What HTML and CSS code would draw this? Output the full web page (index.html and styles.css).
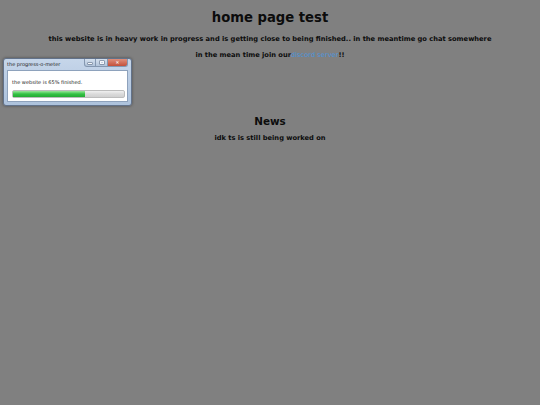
FILE: index.html
```html
<!DOCTYPE html>
<html lang="en">
<head>
  <meta charset="UTF-8" />
  <title>home page test</title>
  <link rel="stylesheet" href="styles.css">
</head>
<body>
  <h1>home page test</h1>
  <p class="intro">this website is in heavy work in progress and is getting close to being finished.. in the meantime go chat somewhere</p>
  <p class="join">in the mean time join our<a href="#">discord server</a>!!</p>

  <h2>News</h2>
  <p class="news">idk ts is still being worked on</p>

  <div class="window">
    <div class="titlebar">
      <span class="title">the progress-o-meter</span>
      <div class="controls">
        <span class="btn min"><i class="dash"></i></span>
        <span class="btn max"><i class="box"></i></span>
        <span class="btn close">&#x2715;</span>
      </div>
    </div>
    <div class="client">
      <p class="status">the website is 65% finished.</p>
      <div class="bar"><div class="fill" style="width: 65%"></div></div>
    </div>
  </div>
</body>
</html>
```

FILE: styles.css
```css
body {
  margin: 0;
  background: #808080;
  font-family: "DejaVu Sans", Verdana, sans-serif;
  color: #0c0c0c;
  text-align: center;
}
h1 {
  font-size: 13.2px;
  line-height: 18px;
  margin: 9px 0 0;
}
p {
  font-size: 6.7px;
  font-weight: bold;
  line-height: 10px;
  margin: 6px 0 0;
}
.intro {
  margin-top: 7px;
}
.join a {
  color: #4c95dd;
  font-weight: normal;
  text-decoration: none;
}
h2 {
  font-size: 10.4px;
  line-height: 14px;
  margin: 54px 0 0;
}
.news {
  margin-top: 5px;
}

.window {
  position: absolute;
  left: 3px;
  top: 58px;
  width: 129px;
  height: 48px;
  box-sizing: border-box;
  border: 1px solid #62728a;
  border-radius: 3px;
  background: linear-gradient(#c6d6ea, #adc2dc);
  box-shadow: 0 0 3px rgba(0, 0, 0, 0.45);
  text-align: left;
}
.titlebar {
  display: flex;
  justify-content: space-between;
  height: 11px;
  padding: 0 3px 0 3px;
}
.title {
  font-size: 5px;
  line-height: 11px;
  color: #222;
}
.controls {
  display: flex;
}
.btn {
  display: flex;
  align-items: center;
  justify-content: center;
  width: 12px;
  height: 8px;
  border: 1px solid #8497b0;
  border-top: none;
  background: linear-gradient(#d4e0ee, #b2c4da);
  box-sizing: border-box;
}
.btn.min {
  border-radius: 0 0 0 3px;
}
.btn.max {
  border-left: none;
}
.dash {
  width: 4px;
  height: 1px;
  margin-top: 2px;
  background: #f4f6fa;
  box-shadow: 0 0 0 0.5px #56647a;
}
.box {
  width: 4px;
  height: 3px;
  border: 1px solid #f4f6fa;
  box-shadow: 0 0 0 0.5px #56647a;
  box-sizing: border-box;
}
.btn.close {
  width: 20px;
  border-left: none;
  border-radius: 0 0 3px 0;
  background: linear-gradient(#df8f7c, #c4503a);
  color: #fff;
  font-size: 4.5px;
  line-height: 7px;
}
.client {
  margin: 0 3px;
  background: #fff;
  border: 1px solid #8ea2bc;
  height: 32px;
  box-sizing: border-box;
  padding: 0 2px 0 4px;
}
.status {
  font-size: 5px;
  font-weight: normal;
  line-height: 6px;
  margin: 8px 0 0;
  color: #222;
}
.bar {
  margin-top: 5px;
  height: 8px;
  border: 1px solid #bcbcbc;
  border-radius: 2px;
  background: linear-gradient(#f0f0f0, #dadada 50%, #d0d0d0);
  box-sizing: border-box;
}
.fill {
  height: 100%;
  background: linear-gradient(#9be69b, #34c244 50%, #24aa34);
}
```
